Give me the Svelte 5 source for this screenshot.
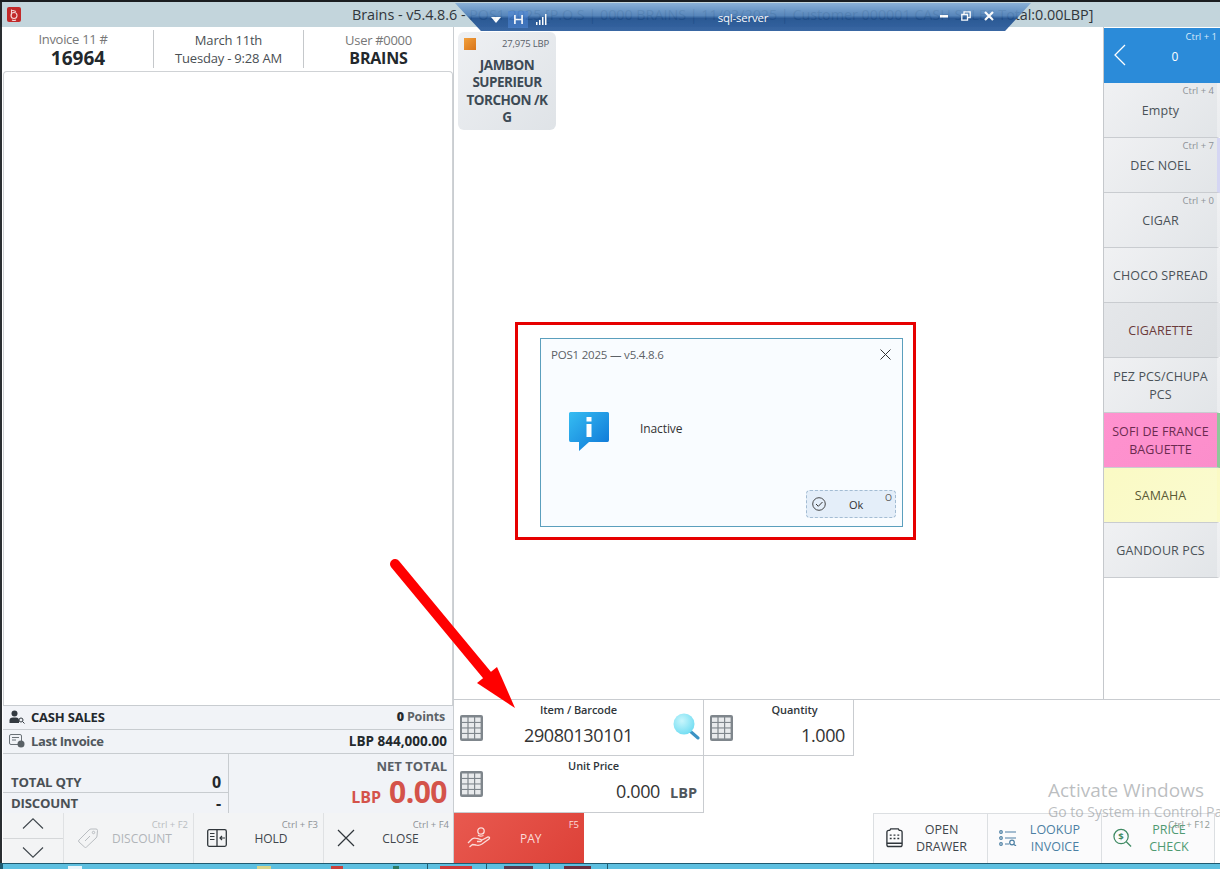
<script>
  const categories = [
    { label: "Empty", keys: "Ctrl + 4" },
    { label: "DEC NOEL", keys: "Ctrl + 7", edge: "#d5d6f3" },
    { label: "CIGAR", keys: "Ctrl + 0" },
    { label: "CHOCO SPREAD" },
    { label: "CIGARETTE", tone: "grey", color: "#6b3b3b" },
    { label: "PEZ PCS/CHUPA PCS" },
    { label: "SOFI DE FRANCE BAGUETTE", tone: "pink", edge: "#8fc79a", color: "#6b2b50" },
    { label: "SAMAHA", tone: "yellow", color: "#5a5a35" },
    { label: "GANDOUR PCS" }
  ];

  // the tops of the task bar icons that still show at the bottom edge
  const tray = [
    { gap: 65, width: 14, color: "#e8f4fa" },
    { gap: 175, width: 14, color: "#d9d48a" },
    { gap: 60, width: 12, color: "#c9403a" },
    { gap: 50, width: 6, color: "#2c7a63" },
    { gap: 28, width: 1, color: "#1f5a70", sep: true },
    { gap: 12, width: 32, color: "#cf3a3a" },
    { gap: 14, width: 1, color: "#1f5a70", sep: true },
    { gap: 17, width: 29, color: "#5a3a50" },
    { gap: 16, width: 1, color: "#1f5a70", sep: true },
    { gap: 14, width: 27, color: "#6a2f40" },
    { gap: 16, width: 1, color: "#1f5a70", sep: true }
  ];
</script>

{#snippet keypad()}
  <svg class="keypad" viewBox="0 0 23 26" width="23" height="26">
    <rect width="23" height="26" rx="2" fill="#7f868c" />
    {#each [0, 1, 2, 3] as r}
      {#each [0, 1, 2] as c}
        <rect x={2 + c * 6.6} y={2.5 + r * 5.5} width="5.4" height="4.4" fill="#e8eaec" />
      {/each}
    {/each}
  </svg>
{/snippet}

<div class="window">
  <header class="titlebar">
    <svg class="logo" viewBox="0 0 14 15" width="14" height="15">
      <rect width="14" height="15" rx="2" fill="#c22a2a" />
      <circle cx="7" cy="8.500" r="3" fill="none" stroke="#f3d5d5" stroke-width="1.1" />
      <path d="M4.500 2.500 V8.500 M4.500 3 L9 4.500 M5 13 Q7 14 9 13" fill="none" stroke="#f3d5d5" stroke-width="1.1" />
    </svg>
    <span class="title">Brains - v5.4.8.6 - POS1 2025 [P.O.S | 0000 BRAINS | 11/03/2025 | Customer 000001 CASH SALES Total:0.00LBP]</span>
  </header>

  <main class="main">
    <section class="left">
      <div class="info">
        <div class="cell">
          <span class="small shifted">Invoice 11 #</span>
          <strong class="num">16964</strong>
        </div>
        <div class="cell">
          <span class="small dark">March 11th</span>
          <span class="small dark">Tuesday - 9:28 AM</span>
        </div>
        <div class="cell">
          <span class="small">User #0000</span>
          <strong class="user">BRAINS</strong>
        </div>
      </div>

      <div class="lines"></div>

      <div class="row">
        <svg viewBox="0 0 16 14" width="16" height="14">
          <circle cx="5.500" cy="3.500" r="3" fill="#333a40" />
          <path d="M0.500 13 V10.500 Q0.500 7.500 4 7.500 H7 Q10 7.500 10 10.500 V13 Z" fill="#333a40" />
          <circle cx="12" cy="10" r="2" fill="none" stroke="#333a40" />
          <path d="M13.500 11.500 L15.500 13.500" stroke="#333a40" />
        </svg>
        <strong class="dark-label">CASH SALES</strong>
        <span class="right-val"><b class="black">0</b> Points</span>
      </div>
      <div class="row">
        <svg viewBox="0 0 16 14" width="16" height="14">
          <rect x="0.500" y="0.500" width="12" height="10" rx="1.500" fill="none" stroke="#6b7278" />
          <path d="M3 3.500 H10 M3 6 H7" stroke="#6b7278" />
          <circle cx="12" cy="10" r="3.500" fill="#5a6166" />
        </svg>
        <strong class="grey-label">Last Invoice</strong>
        <span class="right-val black money">LBP 844,000.00</span>
      </div>

      <div class="totals">
        <div class="qty">
          <div class="qty-row first"><strong>TOTAL QTY</strong><b>0</b></div>
          <div class="qty-row"><strong>DISCOUNT</strong><b>-</b></div>
        </div>
        <div class="net">
          <strong class="net-label">NET TOTAL</strong>
          <div class="net-val"><span class="cur">LBP</span><span class="amount">0.00</span></div>
        </div>
      </div>

      <div class="actions">
        <div class="arrows">
          <button class="arrow up" aria-label="Up">
            <svg viewBox="0 0 22 11" width="22" height="11"><path d="M1 10.500 L11 0.800 L21 10.500" fill="none" stroke="#3f464c" stroke-width="1.100" /></svg>
          </button>
          <button class="arrow down" aria-label="Down">
            <svg viewBox="0 0 22 11" width="22" height="11"><path d="M1 0.500 L11 10.200 L21 0.500" fill="none" stroke="#3f464c" stroke-width="1.100" /></svg>
          </button>
        </div>
        <button class="action disabled">
          <span class="keys">Ctrl + F2</span>
          <svg viewBox="0 0 22 22" width="22" height="22">
            <path d="M2 13 L12 3 Q13 2 14 2 L19 2 Q20.500 2 20.500 3.500 L20 9 Q20 10 19 11 L9.500 20 Q8.500 21 7.500 20 L2 15 Q1 14 2 13 Z" fill="none" stroke="#b9bdc1" />
            <circle cx="16.500" cy="5.500" r="1.200" fill="none" stroke="#b9bdc1" />
            <path d="M8 14 L13 9 M8.500 10.500 h.01 M12.500 13 h.01" stroke="#b9bdc1" />
          </svg>
          <span class="action-label">DISCOUNT</span>
        </button>
        <button class="action">
          <span class="keys">Ctrl + F3</span>
          <svg viewBox="0 0 20 18" width="20" height="18">
            <rect x="0.700" y="0.700" width="18.600" height="16.600" rx="1.500" fill="none" stroke="#30363b" stroke-width="1.300" />
            <path d="M10 1 V17" stroke="#30363b" stroke-width="1.300" />
            <path d="M3 4.500 H7.500 M3 7.500 H7.500 M3 10.500 H7.500" stroke="#30363b" stroke-width="1.200" />
            <path d="M18 9 H13 M15 7 L13 9 L15 11" fill="none" stroke="#30363b" stroke-width="1.200" />
          </svg>
          <span class="action-label">HOLD</span>
        </button>
        <button class="action">
          <span class="keys">Ctrl + F4</span>
          <svg viewBox="0 0 18 18" width="18" height="18"><path d="M1 1 L17 17 M17 1 L1 17" stroke="#30363b" stroke-width="1.200" /></svg>
          <span class="action-label">CLOSE</span>
        </button>
      </div>
    </section>

    <section class="center">
      <div class="top">
        <div class="items">
          <div class="tile">
            <div class="tile-head">
              <span class="swatch"></span>
              <span class="price">27,975 LBP</span>
            </div>
            <strong class="tile-name">JAMBON SUPERIEUR TORCHON /K<br />G</strong>
          </div>
        </div>
        <nav class="cats">
          <button class="cat back">
            <span class="keys light">Ctrl + 1</span>
            <svg viewBox="0 0 12 22" width="12" height="22"><path d="M11 1 L1 11 L11 21" fill="none" stroke="#fff" stroke-width="1.300" /></svg>
            <span class="count">0</span>
          </button>
          {#each categories as cat}
            <button class="cat {cat.tone ?? ''}" style:color={cat.color} style:border-right-color={cat.edge}>
              {#if cat.keys}<span class="keys">{cat.keys}</span>{/if}
              <span class="cat-label">{cat.label}</span>
            </button>
          {/each}
        </nav>
      </div>

      <div class="bottom">
        <div class="inputs">
          <div class="field item">
            {@render keypad()}
            <span class="field-label">Item / Barcode</span>
            <span class="field-val barcode">29080130101</span>
            <svg class="search" viewBox="0 0 28 27" width="28" height="27">
              <defs>
                <radialGradient id="lens" cx="0.4" cy="0.35" r="0.7">
                  <stop offset="0" stop-color="#c8f6fc" />
                  <stop offset="1" stop-color="#6fdcf2" />
                </radialGradient>
              </defs>
              <path d="M18 18 L26 25" stroke="#3c93c4" stroke-width="3" stroke-linecap="round" />
              <circle cx="12" cy="11" r="10.500" fill="url(#lens)" />
            </svg>
          </div>
          <div class="field qty-field">
            {@render keypad()}
            <span class="field-label">Quantity</span>
            <span class="field-val end">1.000</span>
          </div>
          <div class="field unit">
            {@render keypad()}
            <span class="field-label">Unit Price</span>
            <span class="field-val end">0.000<b class="unit-cur">LBP</b></span>
          </div>
        </div>

        <div class="commands">
          <button class="pay">
            <span class="keys f5">F5</span>
            <svg viewBox="0 0 24 24" width="24" height="24">
              <circle cx="14" cy="5" r="3.200" fill="none" stroke="#fbdcd9" stroke-width="1.300" />
              <path d="M11 9 Q13 11 16.500 9.500 M1 17 L5 13 Q7 11.500 10 12.500 L14 13.500 Q15.500 14.500 13.500 15.500 L10 15.500 M15 14 L21 11 Q23.500 11 22 13 L15 18 Q12 20 9 19 L5.500 18.500 L2.500 21" fill="none" stroke="#fbdcd9" stroke-width="1.300" />
            </svg>
            <span class="pay-label">PAY</span>
          </button>
          <div class="tools">
            <button class="tool">
              <svg viewBox="0 0 20 21" width="19" height="21">
                <path d="M2 18 V5 Q2 3 4 3 H5 L6 1.500 H14 L15 3 H16 Q18 3 18 5 V18 Q18 20 16 20 H4 Q2 20 2 18 Z" fill="none" stroke="#2f353a" stroke-width="1.400" />
                <path d="M2 16.500 H18 M5 8 h2 M9 8 h2 M13 8 h2 M5 11.500 h2 M9 11.500 h2 M13 11.500 h2" stroke="#2f353a" stroke-width="1.500" />
              </svg>
              <span>OPEN<br />DRAWER</span>
            </button>
            <button class="tool blue">
              <svg viewBox="0 0 18 16" width="18" height="16">
                <g fill="none" stroke="#4c7fa3" stroke-width="1.200">
                  <circle cx="2" cy="2" r="1.300" />
                  <circle cx="2" cy="8" r="1.300" />
                  <circle cx="2" cy="14" r="1.300" />
                  <path d="M6 2 H17 M6 8 H17 M6 14 H10" />
                  <circle cx="13" cy="12.500" r="2.300" />
                  <path d="M15 14.500 L17 16" />
                </g>
              </svg>
              <span>LOOKUP<br />INVOICE</span>
            </button>
            <button class="tool green">
              <span class="keys over">Ctrl + F12</span>
              <svg viewBox="0 0 20 20" width="19" height="20">
                <circle cx="8.500" cy="8.500" r="7.500" fill="none" stroke="#3f8a63" stroke-width="1.300" />
                <path d="M14 14 L19 19" stroke="#3f8a63" stroke-width="1.300" />
                <text x="8.500" y="12" text-anchor="middle" font-size="10" font-weight="700" fill="#3f8a63" font-family="Open Sans">$</text>
              </svg>
              <span>PRICE<br />CHECK</span>
            </button>
          </div>
        </div>
      </div>
    </section>
  </main>

  <footer class="taskbar">
    {#each tray as t}
      <span class="tray" class:sep={t.sep} style:margin-left="{t.gap}px" style:width="{t.width}px" style:background={t.color}></span>
    {/each}
  </footer>

  <!-- remote desktop connection bar, sits over the title -->
  <div class="rdp">
    <span class="rdp-icons left-icons">
      <svg viewBox="0 0 10 6" width="10" height="6"><path d="M0 0 H10 L5 6 Z" fill="#fff" /></svg>
      <span class="pin">
        <svg viewBox="0 0 12 10" width="11" height="9"><path d="M2 0 V10 M10 0 V10 M2 5 H10" stroke="#fff" stroke-width="1.800" /></svg>
      </span>
      <svg viewBox="0 0 12 11" width="12" height="11"><path d="M1 11 V8 H2.500 V11 Z M4 11 V6 H5.500 V11 Z M7 11 V3 H8.500 V11 Z M10 11 V0 H11.500 V11 Z" fill="#fff" /></svg>
    </span>
    <span class="rdp-name">sql-server</span>
    <span class="rdp-icons right-icons">
      <svg viewBox="0 0 8 3" width="8" height="3"><rect width="8" height="2.500" fill="#fff" /></svg>
      <svg viewBox="0 0 10 10" width="10" height="10"><path d="M3 3 V0.800 H9.200 V6.500 H7 M0.800 3.500 H6.500 V9.200 H0.800 Z" fill="none" stroke="#fff" stroke-width="1.300" /></svg>
      <svg viewBox="0 0 10 10" width="10" height="10"><path d="M1 1 L9 9 M9 1 L1 9" stroke="#fff" stroke-width="2.200" /></svg>
    </span>
  </div>

  <!-- annotations drawn on the screenshot -->
  <div class="callout">
    <div class="dialog">
      <div class="dialog-head">
        <span>POS1 2025 — v5.4.8.6</span>
        <svg viewBox="0 0 11 11" width="11" height="11"><path d="M0.500 0.500 L10.500 10.500 M10.500 0.500 L0.500 10.500" stroke="#333" /></svg>
      </div>
      <div class="dialog-body">
        <svg viewBox="0 0 40 40" width="40" height="40">
          <defs>
            <linearGradient id="bubble" x1="0" y1="0" x2="1" y2="1">
              <stop offset="0" stop-color="#36bdf2" />
              <stop offset="1" stop-color="#0c74d6" />
            </linearGradient>
          </defs>
          <path d="M1.500 0 H38.500 Q40 0 40 1.500 V28 Q40 30 38.500 30 H20 L10 39 V30 H1.500 Q0 30 0 28 V1.500 Q0 0 1.500 0 Z" fill="url(#bubble)" />
          <rect x="17.500" y="5" width="5" height="4.500" fill="#fff" />
          <rect x="17.500" y="12" width="5" height="13" fill="#fff" />
        </svg>
        <span>Inactive</span>
      </div>
      <div class="dialog-foot">
        <button class="ok">
          <svg viewBox="0 0 14 14" width="14" height="14">
            <circle cx="7" cy="7" r="6.300" fill="none" stroke="#333" stroke-width="0.900" />
            <path d="M4 7 L6.300 9.300 L10.500 5" fill="none" stroke="#333" />
          </svg>
          <span class="ok-label">Ok</span>
          <span class="ok-key">O</span>
        </button>
      </div>
    </div>
  </div>

  <svg class="red-arrow" viewBox="0 0 130 155" width="130" height="155">
    <path d="M5 6 L97 117" stroke="#f00" stroke-width="10" stroke-linecap="round" />
    <path d="M107 109 L125 150 L87 125 Z" fill="#f00" />
  </svg>

  <div class="watermark">
    <div class="wm-title">Activate Windows</div>
    <div class="wm-sub">Go to System in Control Panel to activate Windows.</div>
  </div>
</div>

<style>
  :global(body) {
    margin: 0;
    background: #fff;
    overflow: hidden;
  }

  .window {
    position: relative;
    width: 1220px;
    height: 869px;
    overflow: hidden;
    display: flex;
    flex-direction: column;
    font-family: "Open Sans", "Noto Sans", sans-serif;
    color: #333;
    background: #fff;
    box-sizing: border-box;
    border-top: 2px solid #1a1d20;
  }

  button {
    font: inherit;
    padding: 0;
    border: none;
    background: none;
    color: inherit;
  }

  .titlebar {
    height: 25px;
    flex: none;
    display: flex;
    align-items: center;
    padding-left: 5px;
    background: #c3d5dc;
    box-sizing: border-box;
    border-left: 2px solid #23272a;
    white-space: nowrap;
  }

  .title {
    margin-left: 331px;
    font-size: 14.400px;
    color: #30363b;
    letter-spacing: -0.05px;
  }

  .main {
    flex: 1;
    min-height: 0;
    display: flex;
  }

  /* left column */
  .left {
    width: 454px;
    flex: none;
    display: flex;
    flex-direction: column;
    box-sizing: border-box;
    background: #fff;
    border-right: 1px solid #c9cdd1;
    border-left: 2px solid #2a2e31;
    padding-left: 1px;
  }

  .info {
    height: 44px;
    flex: none;
    display: flex;
    align-items: center;
  }

  .cell {
    width: 150px;
    height: 38px;
    flex: none;
    display: flex;
    flex-direction: column;
    align-items: center;
    justify-content: center;
    border-left: 1px solid #c5c8cb;
    box-sizing: border-box;
  }

  .cell:first-child {
    border-left: none;
  }

  .small {
    font-size: 13px;
    line-height: 18px;
    color: #777;
    letter-spacing: -0.3px;
  }

  .small.shifted {
    margin-right: 10px;
  }

  .small.dark {
    color: #4a4f54;
    letter-spacing: -0.2px;
  }

  .num {
    font-size: 19px;
    line-height: 20px;
    color: #23282c;
  }

  .user {
    font-size: 16px;
    line-height: 18px;
    color: #23282c;
    letter-spacing: -0.2px;
  }

  .lines {
    flex: 1;
    border: 1px solid #cfd2d5;
    border-radius: 4px 4px 0 0;
    border-bottom: none;
  }

  .row {
    height: 24px;
    flex: none;
    display: flex;
    align-items: center;
    gap: 6px;
    padding: 0 8px 2px 6px;
    background: #f1f3f7;
    border-top: 1px solid #c8ccd0;
    font-size: 13px;
    box-sizing: border-box;
  }

  .dark-label {
    color: #23282c;
    letter-spacing: -0.2px;
  }

  .grey-label {
    color: #50575d;
    letter-spacing: -0.4px;
  }

  .right-val {
    margin-left: auto;
    font-weight: 700;
    font-size: 12.500px;
    color: #5d6368;
    letter-spacing: -0.2px;
  }

  .black {
    color: #23282c;
  }

  .money {
    font-size: 13.500px;
    margin-right: -2px;
    letter-spacing: 0;
  }

  .totals {
    height: 60px;
    flex: none;
    display: flex;
    background: #f1f3f7;
    border-top: 1px solid #c8ccd0;
    box-sizing: border-box;
  }

  .qty {
    width: 226px;
    flex: none;
    display: flex;
    flex-direction: column;
    justify-content: flex-end;
    border-right: 1px solid #c8ccd0;
    box-sizing: border-box;
  }

  .qty-row {
    height: 20px;
    display: flex;
    align-items: center;
    justify-content: space-between;
    padding: 0 7px 0 8px;
    font-size: 13.200px;
    color: #4a5055;
    letter-spacing: -0.2px;
  }

  .qty-row.first {
    border-bottom: 1px solid #c8ccd0;
  }

  .qty-row b {
    font-size: 16px;
    color: #23282c;
  }

  .net {
    flex: 1;
    display: flex;
    flex-direction: column;
    align-items: flex-end;
    padding: 2px 6px 0 0;
  }

  .net-label {
    font-size: 13px;
    line-height: 20px;
    color: #5a6065;
  }

  .net-val {
    display: flex;
    align-items: baseline;
    gap: 8px;
    color: #d4534a;
    font-weight: 700;
    line-height: 31px;
  }

  .cur {
    font-size: 16px;
  }

  .amount {
    font-size: 30px;
    letter-spacing: -0.5px;
  }

  .actions {
    height: 50px;
    flex: none;
    display: flex;
    background: #f3f4f5;
  }

  .arrows {
    width: 60px;
    flex: none;
    display: flex;
    flex-direction: column;
    border-right: 1px solid #dfe1e3;
  }

  .arrow {
    flex: 1;
    display: flex;
    align-items: center;
    justify-content: center;
  }

  .arrow.up {
    padding-bottom: 3px;
    border-bottom: 1px solid #d5d7d9;
  }

  .arrow.down {
    padding-top: 3px;
  }

  .action {
    position: relative;
    width: 130px;
    flex: none;
    display: flex;
    align-items: center;
    padding-left: 13px;
    border-right: 1px solid #dfe1e3;
    box-sizing: border-box;
    font-size: 12px;
    color: #3f464c;
  }

  .action:last-child {
    border-right: none;
  }

  .action.disabled {
    color: #b1b5b9;
  }

  .action-label {
    flex: 1;
    text-align: center;
    margin-right: 8px;
  }

  .keys {
    position: absolute;
    top: 5px;
    right: 5px;
    font-size: 9.500px;
    color: #8d9297;
    white-space: nowrap;
  }

  .action.disabled .keys {
    color: #b9bdc1;
  }

  /* center column */
  .center {
    flex: 1;
    min-width: 0;
    display: flex;
    flex-direction: column;
  }

  .top {
    height: 672px;
    flex: none;
    display: flex;
  }

  .items {
    flex: 1;
    padding: 5px 4px;
  }

  .tile {
    width: 98px;
    height: 98px;
    border-radius: 6px;
    background: linear-gradient(135deg, #eef0f3, #dfe3e7);
    padding: 5px 6px 0;
    box-sizing: border-box;
  }

  .tile-head {
    display: flex;
    align-items: center;
    justify-content: space-between;
    height: 13px;
  }

  .swatch {
    width: 12px;
    height: 12px;
    background: linear-gradient(135deg, #f2a03c, #d8741a);
  }

  .price {
    font-size: 9.500px;
    color: #59616a;
    letter-spacing: -0.2px;
    margin-right: 1px;
  }

  .tile-name {
    display: block;
    margin-top: 7px;
    margin-left: -2px;
    width: 90px;
    font-size: 13.500px;
    line-height: 17.400px;
    text-align: center;
    color: #3d4a55;
    letter-spacing: -0.5px;
  }

  .cats {
    width: 117px;
    flex: none;
    display: flex;
    flex-direction: column;
    padding-top: 1px;
    border-left: 1px solid #c5c8cc;
    box-sizing: border-box;
  }

  .cat {
    position: relative;
    height: 55px;
    flex: none;
    display: flex;
    align-items: center;
    justify-content: center;
    text-align: center;
    padding-top: 2px;
    font-size: 12.500px;
    line-height: 18px;
    color: #4a5258;
    background: linear-gradient(135deg, #f0f1f3, #e2e5e8);
    border-bottom: 1px solid #c9ccd0;
    border-right: 3px solid transparent;
    box-sizing: border-box;
  }

  .cat-label {
    padding: 0 5px;
    letter-spacing: 0.1px;
  }

  .cat.grey {
    background: linear-gradient(135deg, #e5e7ea, #dcdfe2);
  }

  .cat.pink {
    background: linear-gradient(135deg, #ff92cf, #fb8ecb);
  }

  .cat.yellow {
    background: linear-gradient(135deg, #fafac4, #fafbd0);
  }

  .cat.back {
    padding-top: 2px;
    background: #2b8bd9;
    color: #fff;
    font-size: 12px;
    border-right: none;
    border-bottom: none;
  }

  .cat.back svg {
    position: absolute;
    left: 10px;
    top: 16px;
  }

  .count {
    margin-left: 26px;
  }

  .keys.light {
    color: #d7eafa;
  }

  .cat .keys {
    top: -1px;
    right: 3px;
  }

  .cat.back .keys {
    top: 0;
    right: 3px;
  }

  .bottom {
    flex: 1;
    min-height: 0;
    display: flex;
    flex-direction: column;
    border-top: 1px solid #c9ccd0;
  }

  .inputs {
    display: grid;
    grid-template-columns: 250px 150px;
    grid-template-rows: 56px 57px;
    height: 113px;
    flex: none;
  }

  .field {
    position: relative;
    box-sizing: border-box;
    border-right: 1px solid #c9ccd0;
    border-bottom: 1px solid #c9ccd0;
    display: flex;
    align-items: flex-end;
  }

  .qty-field {
    border-left: 1px solid #c9ccd0;
    margin-left: -1px;
  }

  .unit {
    grid-column: 1;
  }

  .keypad {
    position: absolute;
    left: 6px;
    top: 15px;
  }

  .field-label {
    position: absolute;
    top: 2px;
    left: 0;
    right: 0;
    text-align: center;
    font-size: 11px;
    font-weight: 600;
    color: #30363b;
    letter-spacing: -0.1px;
  }

  .unit .field-label {
    left: 30px;
  }

  .qty-field .field-label {
    left: 60px;
    right: 28px;
  }

  .field-val {
    font-size: 18px;
    color: #333;
    line-height: 24px;
    margin-bottom: 8px;
    letter-spacing: -0.4px;
  }

  .barcode {
    margin-left: 70px;
  }

  .end {
    margin-left: auto;
    margin-right: 8px;
    white-space: nowrap;
  }

  .unit .end {
    margin-right: 6px;
    margin-bottom: 7px;
  }

  .unit-cur {
    font-size: 14.500px;
    color: #50575d;
    margin-left: 10px;
    letter-spacing: 0;
  }

  .search {
    position: absolute;
    right: 3px;
    top: 13px;
  }

  .commands {
    flex: 1;
    display: flex;
    justify-content: space-between;
    min-height: 0;
  }

  .pay {
    position: relative;
    width: 130px;
    flex: none;
    display: flex;
    align-items: center;
    padding-left: 13px;
    box-sizing: border-box;
    background: linear-gradient(135deg, #e8594f, #dd4138);
    color: #fbdcd9;
    font-size: 12px;
  }

  .pay-label {
    margin-left: 29px;
  }

  .keys.f5 {
    color: #fbdcd9;
    right: 5px;
  }

  .tools {
    display: flex;
    padding-right: 5px;
  }

  .tool {
    position: relative;
    width: 114px;
    display: flex;
    align-items: center;
    box-sizing: border-box;
    padding: 0 0 2px 11px;
    background: #fbfbfc;
    border-left: 1px solid #dcdfe2;
    border-top: 1px solid #dcdfe2;
    font-size: 12.500px;
    line-height: 17px;
    color: #3f464c;
    text-align: center;
  }

  .tool span:not(.keys) {
    flex: 1;
    margin-right: 8px;
  }

  .tool.blue {
    color: #4c7fa3;
  }

  .tool.green {
    color: #4f9a72;
    border-right: 1px solid #dcdfe2;
  }

  .keys.over {
    top: 2px;
    right: 4px;
    color: #8f9a94;
  }

  .taskbar {
    height: 6px;
    flex: none;
    display: flex;
    align-items: flex-end;
    background: #5dbfe0;
    border-top: 1px solid #1f5a70;
    border-left: 3px solid #1f5a70;
    box-sizing: border-box;
  }

  .tray {
    flex: none;
    height: 3px;
  }

  .tray.sep {
    height: 5px;
  }

  /* overlays */
  .rdp {
    position: absolute;
    top: 1px;
    left: 455px;
    width: 576px;
    height: 28px;
    display: flex;
    align-items: center;
    justify-content: center;
    clip-path: polygon(0 0, 100% 0, 95.500% 100%, 4.500% 100%);
    background: linear-gradient(#86aed6 0, #4f80b8 45%, #20508f 55%, #2a5c9c 100%);
    opacity: 0.93;
    color: #fff;
    font-size: 11.500px;
  }

  .rdp-name {
    letter-spacing: -0.2px;
  }

  .rdp-icons {
    position: absolute;
    top: 8px;
    display: flex;
    align-items: center;
    gap: 10px;
  }

  .left-icons {
    left: 36px;
  }

  .right-icons {
    right: 37px;
    gap: 13px;
  }

  .pin {
    display: flex;
    align-items: center;
    justify-content: center;
    width: 20px;
    height: 17px;
    margin: 0 -3px;
    background: rgba(70, 130, 215, 0.55);
    box-sizing: border-box;
  }

  .callout {
    position: absolute;
    left: 515px;
    top: 320px;
    width: 401px;
    height: 218px;
    box-sizing: border-box;
    border: 3px solid #e60000;
    padding: 13px 10px 10px 22px;
    background: #fff;
  }

  .dialog {
    height: 100%;
    box-sizing: border-box;
    border: 1px solid #5b9fbd;
    background: #f9fcff;
    display: flex;
    flex-direction: column;
    font-size: 12px;
  }

  .dialog-head {
    display: flex;
    justify-content: space-between;
    align-items: center;
    padding: 8px 11px 0 10px;
    font-size: 11.500px;
    color: #5c6166;
    letter-spacing: -0.2px;
  }

  .dialog-body {
    flex: 1;
    display: flex;
    align-items: flex-start;
    padding: 50px 0 0 28px;
    gap: 31px;
    color: #333;
  }

  .dialog-body span {
    margin-top: 8px;
    letter-spacing: -0.1px;
  }

  .dialog-foot {
    display: flex;
    justify-content: flex-end;
    padding: 0 6px 8px 0;
  }

  .ok {
    position: relative;
    width: 90px;
    height: 28px;
    display: flex;
    align-items: center;
    padding-left: 5px;
    box-sizing: border-box;
    border: 1px dashed #a3bcd3;
    border-radius: 4px;
    background: #e4eef9;
    font-size: 11px;
    color: #333;
  }

  .ok-label {
    margin-left: 23px;
  }

  .ok-key {
    position: absolute;
    right: 3px;
    top: 0;
    font-size: 9px;
    color: #555;
  }

  .red-arrow {
    position: absolute;
    left: 390px;
    top: 556px;
  }

  .watermark {
    position: absolute;
    left: 1048px;
    top: 776px;
    white-space: nowrap;
    color: rgba(120, 125, 130, 0.5);
    pointer-events: none;
  }

  .wm-title {
    font-size: 19px;
    line-height: 24px;
  }

  .wm-sub {
    font-size: 14px;
    line-height: 20px;
  }
</style>
